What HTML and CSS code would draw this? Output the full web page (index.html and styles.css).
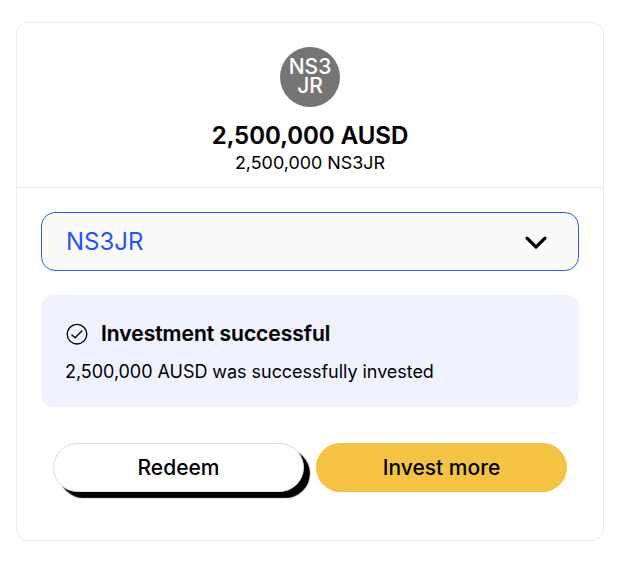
FILE: index.html
```html
<!DOCTYPE html>
<html lang="en">
<head>
<meta charset="utf-8">
<title>Investment</title>
<link rel="stylesheet" href="styles.css">
</head>
<body>
<main class="card">
  <header class="summary">
    <div class="token"><span>NS3<br>JR</span></div>
    <h1 class="amount">2,500,000 AUSD</h1>
    <p class="sub">2,500,000 NS3JR</p>
  </header>
  <section class="content">
    <div class="select"><span>NS3JR</span>
      <svg class="chevron" width="24" height="16" viewBox="0 0 24 16"><path d="M3 4.2l9 8.8 9-8.8" fill="none" stroke="#000" stroke-width="3.2" stroke-linecap="round" stroke-linejoin="round"/></svg>
    </div>
    <div class="notice">
      <div class="notice-head">
        <svg width="22" height="22" viewBox="0 0 22 22" fill="none" stroke="#000" stroke-width="1.4" stroke-linecap="round" stroke-linejoin="round"><circle cx="11" cy="11.2" r="9.8"/><path d="M5.9 11.9l3.2 2.9 6.8-6.9"/></svg>
        <h2>Investment successful</h2>
      </div>
      <p>2,500,000 AUSD was successfully invested</p>
    </div>
    <div class="actions">
      <button class="btn redeem">Redeem</button>
      <button class="btn invest">Invest more</button>
    </div>
  </section>
</main>
</body>
</html>
```
FILE: styles.css
```css
* { box-sizing: border-box; }
body { margin: 0; padding: 22px 24px 21px 16px; background: #fff; color: #000; font-family: Inter, sans-serif; }
h1, h2, p { margin: 0; }
.card { height: 519px; border: 1px solid #ebebeb; border-radius: 12px; }
.summary { height: 165px; padding-top: 24px; border-bottom: 1px solid #ebebeb; display: flex; flex-direction: column; align-items: center; }
.token { width: 60px; height: 60px; padding-bottom: 2px; border-radius: 50%; background: #757575; color: #fff; display: flex; align-items: center; justify-content: center; text-align: center; font-size: 21px; line-height: 19px; font-weight: 500; }
.amount { margin-top: 14px; font-size: 24px; line-height: 30px; font-weight: 600; -webkit-text-stroke: 0.2px #000; }
.sub { font-size: 17.9px; line-height: 24px; }
.content { padding: 24px; }
.select { height: 59px; padding: 0 30px 0 24px; border: 1px solid #2f5bf5; border-radius: 14px; background: #fafafa; color: #2853f8; font-size: 24px; display: flex; align-items: center; justify-content: space-between; }
.notice { height: 112px; margin-top: 24px; padding: 24px; border-radius: 12px; background: #f0f2ff; }
.notice-head { display: flex; align-items: center; gap: 13px; height: 30px; }
.notice svg { margin-left: 1px; }
h2 { font-size: 21px; line-height: 30px; font-weight: 600; -webkit-text-stroke: 0.2px #000; }
.notice p { margin-top: 10px; font-size: 18px; line-height: 25px; letter-spacing: -0.045px; }
.actions { display: grid; grid-template-columns: 1fr 1fr; gap: 12px; margin: 36px 12px 0; }
.btn { height: 49px; padding: 0; border-radius: 25px; font: 500 21px Inter, sans-serif; color: #000; }
.redeem { background: #fff; border: 1px solid #ddd; box-shadow: 6px 6px 1px #000; }
.invest { background: #f5c344; border: 0; }
```
